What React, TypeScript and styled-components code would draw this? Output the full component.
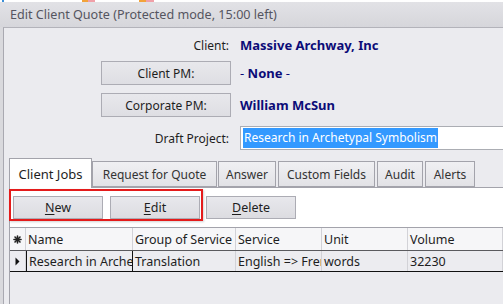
import React from 'react'
import styled, { createGlobalStyle } from 'styled-components'

const Global = createGlobalStyle`
  html, body {
    margin: 0;
    padding: 0;
  }
  body {
    background: #ebebef;
    font-family: "Noto Sans", "Open Sans", sans-serif;
    font-size: 12px;
    color: #1e1e1e;
    overflow: hidden;
  }
`

const Window = styled.div`
  width: 503px;
  height: 304px;
  display: flex;
  flex-direction: column;
  overflow: hidden;
  background: #d9d9dd;
`

const TopStrip = styled.div`
  height: 2px;
  background: linear-gradient(90deg,
    #fff 0 2px, #3b8fd8 2px 4px, #fff 4px 82px,
    #f2a33a 82px 88px, #f0a0a8 88px 95px, #fff 95px 139px,
    #f2a33a 139px 146px, #f0a0a8 146px 154px, #fff 154px);
`

const TitleBar = styled.div`
  height: 25px;
  display: flex;
  align-items: center;
  padding-left: 10px;
  background: linear-gradient(#e2e2e6, #d6d6db);
  color: #555560;
  font-size: 12.6px;
  white-space: nowrap;
`

const Body = styled.div`
  flex: 1;
  display: flex;
  flex-direction: column;
  margin-left: 3px;
  border-left: 1px solid #a9a9b1;
  border-top: 1px solid #b3b3ba;
  background: #ebebef;
  min-height: 0;
`

const FieldRow = styled.div<{ $mt: number }>`
  display: grid;
  grid-template-columns: 227px 1fr;
  column-gap: 9px;
  height: 24px;
  margin-top: ${p => p.$mt}px;
  align-items: center;
`

const Label = styled.div`
  text-align: right;
  padding-right: 2px;
  white-space: nowrap;
`

const LabelButton = styled.div`
  justify-self: end;
  width: 128px;
  height: 22px;
  display: flex;
  align-items: center;
  justify-content: center;
  border: 1px solid #acacb4;
  background: linear-gradient(#e8e8ec, #dedee3);
  white-space: nowrap;
`

const Value = styled.div`
  font-weight: 700;
  color: #0c0c78;
  font-size: 13px;
  white-space: nowrap;
`

const Dash = styled.span`
  font-weight: 400;
`

const TextInput = styled.div`
  height: 22px;
  display: flex;
  align-items: center;
  padding-left: 2px;
  background: #fff;
  border: 1px solid #abadb3;
  border-right: none;
  white-space: nowrap;
`

const Selected = styled.span`
  background: #3399ff;
  color: #fff;
  padding: 1px 1px 2px;
`

const TabStrip = styled.div`
  display: flex;
  align-items: flex-end;
  height: 29px;
  margin-top: 8px;
  padding-left: 5px;
`

const Tab = styled.div<{ $w: number; $active?: boolean; $gap?: number }>`
  box-sizing: border-box;
  width: ${p => p.$w}px;
  height: ${p => (p.$active ? 30 : 26)}px;
  margin-left: ${p => p.$gap ?? 0}px;
  margin-bottom: ${p => (p.$active ? -1 : 0)}px;
  display: flex;
  align-items: center;
  justify-content: center;
  border: 1px solid #a3a3ab;
  border-bottom: ${p => (p.$active ? 'none' : '1px solid #a3a3ab')};
  background: ${p => (p.$active ? '#fff' : 'linear-gradient(#f0f0f3, #e2e2e6)')};
  color: ${p => (p.$active ? '#1e1e1e' : '#333')};
  font-size: ${p => (p.$active ? 13 : 12)}px;
  white-space: nowrap;
  position: relative;
  z-index: ${p => (p.$active ? 1 : 0)};
`

const Panel = styled.div`
  flex: 1;
  display: flex;
  flex-direction: column;
  margin-left: 5px;
  border-left: 1px solid #a3a3ab;
  border-top: 1px solid #a3a3ab;
  background: #fff;
  min-height: 0;
`

const Toolbar = styled.div`
  display: flex;
  align-items: flex-end;
  padding-top: 1px;
`

const Highlight = styled.div`
  display: flex;
  gap: 7px;
  margin-left: -1px;
  padding: 5px 1px 0 2px;
  border: 2px solid #e41b1b;
  box-shadow: 1px 1px 2px rgba(0, 0, 0, 0.18);
`

const Button = styled.div<{ $gap?: number; $lift?: number }>`
  box-sizing: border-box;
  width: 90px;
  height: 23px;
  margin-left: ${p => p.$gap ?? 0}px;
  margin-bottom: ${p => p.$lift ?? 0}px;
  display: flex;
  align-items: center;
  justify-content: center;
  border: 1px solid #acacb4;
  background: linear-gradient(#e8e8ec, #dcdce1);
  font-size: 12.5px;

  u {
    text-decoration-thickness: 1px;
    text-underline-offset: 2px;
  }
`

const Grid = styled.div`
  flex: 1;
  margin-top: 6px;
  border-top: 1px solid #a3a3ab;
  background: #ebebef;
`

const GridRow = styled.div<{ $header?: boolean }>`
  display: grid;
  grid-template-columns: 16px 107px 103px 86px 86px 1fr;
  height: ${p => (p.$header ? 22 : 20)}px;
  background: ${p => (p.$header ? '#f6f6f8' : '#ececf0')};
  border-bottom: 1px solid ${p => (p.$header ? '#5a5a5e' : '#111')};
`

const Cell = styled.div<{ $focus?: boolean }>`
  display: flex;
  align-items: center;
  padding-left: 2px;
  overflow: hidden;
  white-space: nowrap;
  border-right: 1px solid #d2d2d7;
  ${p => (p.$focus ? 'border-left: 1px solid #111; border-right: 1px solid #111;' : '')}
  font-size: 12.5px;
`

const IndicatorCell = styled.div`
  display: flex;
  align-items: center;
  justify-content: center;
  border-right: 1px solid #d2d2d7;
`

const columns = ['Name', 'Group of Service', 'Service', 'Unit', 'Volume']
const row = ['Research in Archetypal Symbolism', 'Translation', 'English => French', 'words', '32230']

export default function App() {
  return (
    <>
      <Global />
      <Window>
        <TopStrip />
        <TitleBar>Edit Client Quote (Protected mode, 15:00 left)</TitleBar>
        <Body>
          <FieldRow $mt={5}>
            <Label>Client:</Label>
            <Value>Massive Archway, Inc</Value>
          </FieldRow>
          <FieldRow $mt={4}>
            <LabelButton>Client PM:</LabelButton>
            <Value>
              <Dash>- </Dash>None<Dash> -</Dash>
            </Value>
          </FieldRow>
          <FieldRow $mt={8}>
            <LabelButton>Corporate PM:</LabelButton>
            <Value>William McSun</Value>
          </FieldRow>
          <FieldRow $mt={9}>
            <Label>Draft Project:</Label>
            <TextInput>
              <Selected>Research in Archetypal Symbolism</Selected>
            </TextInput>
          </FieldRow>

          <TabStrip>
            <Tab $w={83} $active>Client Jobs</Tab>
            <Tab $w={125}>Request for Quote</Tab>
            <Tab $w={58} $gap={1}>Answer</Tab>
            <Tab $w={97} $gap={2}>Custom Fields</Tab>
            <Tab $w={46} $gap={2}>Audit</Tab>
            <Tab $w={50} $gap={2}>Alerts</Tab>
          </TabStrip>

          <Panel>
            <Toolbar>
              <Highlight>
                <Button><span><u>N</u>ew</span></Button>
                <Button><span><u>E</u>dit</span></Button>
              </Highlight>
              <Button $gap={3} $lift={2}><span><u>D</u>elete</span></Button>
            </Toolbar>

            <Grid>
              <GridRow $header>
                <IndicatorCell>
                  <svg width="9" height="9" viewBox="0 0 9 9">
                    <g stroke="#222" strokeWidth="1.6" strokeLinecap="round">
                      <line x1="4.5" y1="1" x2="4.5" y2="8" />
                      <line x1="1" y1="4.5" x2="8" y2="4.5" />
                      <line x1="2" y1="2" x2="7" y2="7" />
                      <line x1="7" y1="2" x2="2" y2="7" />
                    </g>
                  </svg>
                </IndicatorCell>
                {columns.map(c => (
                  <Cell key={c}>{c}</Cell>
                ))}
              </GridRow>
              <GridRow>
                <IndicatorCell>
                  <svg width="5" height="9" viewBox="0 0 5 9">
                    <path d="M0.5 0.5 L4.5 4.5 L0.5 8.5 Z" fill="#111" />
                  </svg>
                </IndicatorCell>
                {row.map((v, i) => (
                  <Cell key={i} $focus={i === 0}>{v}</Cell>
                ))}
              </GridRow>
            </Grid>
          </Panel>
        </Body>
      </Window>
    </>
  )
}
